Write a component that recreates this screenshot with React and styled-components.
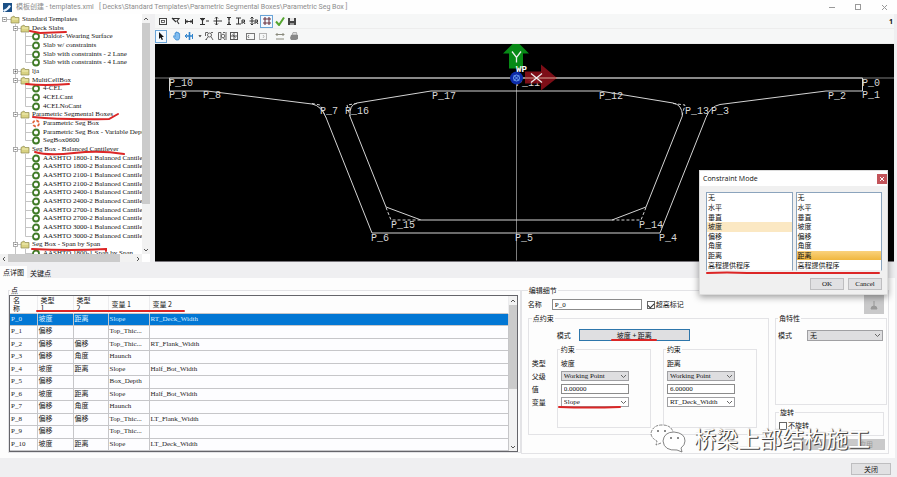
import React from 'react'
import { useState } from 'react'
import styled, { createGlobalStyle } from 'styled-components'

const latin = `"Liberation Serif", "Noto Sans CJK SC", serif`
const ui = `"Open Sans", "Noto Sans CJK SC", sans-serif`

const GlobalStyle = createGlobalStyle`
    * { box-sizing: border-box; }
    body { margin: 0; background: #efeff1; }
    button, input, select { font: inherit; color: inherit; margin: 0; padding: 0; border-radius: 0; }
    ul { list-style: none; margin: 0; padding: 0; }
    svg { display: block; flex: none; }
`

const Page = styled.div`
    position: relative;
    display: flex;
    flex-direction: column;
    min-height: 100vh;
    overflow: hidden;
    font: 7px/9px "Noto Sans CJK SC", sans-serif;
    color: #111;
`

const TitleBar = styled.header`
    display: flex;
    align-items: center;
    gap: 4px;
    height: 14px;
    padding-left: 3px;
    background: #fefefe;
    color: #8c8c8c;
    font: 7px/12px Roboto, "Noto Sans CJK SC", sans-serif;

    h1 {
        flex: 1;
        margin: 0;
        font: inherit;
        white-space: pre;
    }
`

const WindowButtons = styled.div`
    display: flex;
`

const WindowButton = styled.button`
    display: grid;
    place-items: center;
    width: 26px;
    height: 12px;
    border: 0;
    background: none;
`

const Upper = styled.section`
    display: flex;
    height: 248px;
`

const TreePane = styled.aside`
    display: grid;
    grid-template: 1fr 8px / 1fr 8px;
    width: 150px;
    margin-right: 5px;
    background: #fff;
`

const TreeView = styled.div`
    overflow: hidden;
    padding-top: 1px;
`

const TreeList = styled.ul`
    display: grid;
    grid-template-rows: repeat(28, 1fr);
    height: 243px;
    font: 7px/9px ${latin};
`

const TreeRow = styled.li`
    position: relative;
    display: flex;
    align-items: center;
    gap: 3px;
    min-height: 0;
    white-space: nowrap;
`

const Stroke = styled.svg`
    position: absolute;
    overflow: visible;
    z-index: 1;
    fill: none;
    stroke: #dc2626;
    stroke-width: 2;
    stroke-linecap: round;
    pointer-events: none;
`

const TreeStroke = styled(Stroke)`
    left: 32px;
    top: 8px;
`

const FieldStroke = styled(Stroke)`
    left: 1px;
    top: 52px;
`

const HeadStroke = styled(Stroke)`
    left: 27px;
    top: 14px;
`

const UnderStroke = styled(Stroke)`
    left: 32px;
    bottom: -2px;
`

const ScrollBar = styled.div`
    display: flex;
    flex-direction: ${p => p.$across ? 'row' : 'column'};
    background: #f2f2f2;
`

const ScrollArrow = styled.button`
    display: grid;
    place-items: center;
    width: 8px;
    height: 9px;
    border: 0;
    background: none;
`

const Thumb = styled.div`
    flex: ${p => p.$grow};
    background: #cbcbcb;
`

const Track = styled.div`
    flex: ${p => p.$grow};
`

const Drawing = styled.div`
    flex: 1;
    min-width: 0;
    margin-right: 3px;
    display: flex;
    flex-direction: column;
`

const ToolRow = styled.div`
    display: flex;
    align-items: center;
    height: 15px;
    padding-left: ${p => p.$indent}px;
    background: #f6f7f7;
    border-bottom: 1px solid #ededed;
`

const ToolButton = styled.button`
    display: grid;
    place-items: center;
    width: ${p => p.$w}px;
    height: 13px;
    border: 1px solid ${p => p.$on ? '#6ba5d8' : 'transparent'};
    background: ${p => p.$on ? '#f3f9ff' : 'none'};
`

const ToolGap = styled.span`
    width: ${p => p.$w}px;
    height: 9px;
`

const Count = styled.b`
    margin-left: auto;
    padding-right: 1px;
    font: bold 7px/9px ${ui};
`

const Canvas = styled.div`
    flex: 1;
    min-height: 0;
    background: #000;
    border-bottom: 1px solid #77747a;

    svg { width: 100%; height: 100%; }
    text { font: 10px "Liberation Mono", monospace; fill: #d8d8d8; }
    .origin { font-weight: bold; font-size: 9px; fill: #fff; }
`

const Tabs = styled.nav`
    display: flex;
    align-items: flex-end;
    height: 16px;
`

const Tab = styled.button`
    height: ${p => p.$on ? 12 : 10}px;
    padding: 0 3px;
    border: 0;
    background: ${p => p.$on ? '#fdfdfd' : 'none'};
`

const Panel = styled.main`
    position: relative;
    flex: 1;
    display: grid;
    grid-template-columns: 514fr 369fr;
    align-items: start;
    padding: 8px 6px 4px 8px;
    background: #fdfdfd;
    margin-right: 2px;
`

const Group = styled.fieldset`
    min-width: 0;
    margin: 0;
    padding: 0;
    border: 1px solid #e3e3e6;

    > legend {
        padding: 0 1px;
        margin-left: ${p => p.$inset || 0}px;
        height: 9px;
    }
`

const TableFrame = styled.div`
    display: flex;
    height: 157px;
    margin-right: 2px;
    border: 1px solid #65656a;
    position: relative;
`

const PointTable = styled.table`
    flex: 1;
    height: 155px;
    table-layout: fixed;
    border-collapse: collapse;
    font: 7px/9px ${latin};

    th {
        height: 17px;
        padding: 0 0 0 3px;
        border-right: 1px solid #ececee;
        text-align: left;
        font: 7px/8px "Noto Sans CJK SC", sans-serif;
    }
    td {
        padding: 0 0 0 1px;
        border: 1px solid #c6c6c9;
        border-left: 0;
        line-height: 9px;
        white-space: nowrap;
        overflow: hidden;
    }
`

const PointRow = styled.tr`
    background: ${p => p.$on ? '#0277d4' : '#fdfdff'};
    color: ${p => p.$on ? '#dcefff' : '#222'};
`

const EditGroup = styled(Group)`
    padding: 0 0 1px 6px;
    height: 168px;
`

const NameRow = styled.div`
    display: flex;
    align-items: center;
    height: 19px;
    padding-right: 4px;

    > label:first-child { width: 24px; }
    > label + input + label { margin-left: 5px; }
`

const TextBox = styled.input`
    width: ${p => p.$w ? p.$w + 'px' : '100%'};
    height: ${p => p.$h || 10}px;
    padding: 0 2px;
    border: 1px solid #8b8b8b;
    background: #fff;
    font: 7px/8px ${latin};
    min-width: 0;
`

const CheckLine = styled.label`
    display: flex;
    align-items: center;
    gap: 1px;

    input {
        appearance: none;
        width: 8px;
        height: 8px;
        border: 1px solid #666;
        background: #fff;
        display: grid;
        place-items: center;
    }
    input:checked::after {
        content: '';
        width: 5px;
        height: 3px;
        border: solid #333;
        border-width: 0 0 1px 1px;
        transform: rotate(-45deg);
    }
`

const BridgeButton = styled.button`
    display: grid;
    place-items: center;
    width: 20px;
    height: 19px;
    margin-left: auto;
    border: 0;
    background: #c9c9ca;
`

const EditBody = styled.div`
    display: grid;
    grid-template-columns: 241fr 113fr;
    gap: 6px;
    align-items: start;
`

const PointGroup = styled(Group)`
    padding: 6px 11px 6px 3px;
`

const ModeRow = styled.div`
    display: flex;
    align-items: center;
    padding-left: 25px;
    gap: 8px;
`

const ModeButton = styled.button`
    position: relative;
    width: 111px;
    height: 12px;
    border: 1px solid #2d76ab;
    background: #dfdfe1;
    line-height: 9px;
`

const Constraints = styled.div`
    display: grid;
    grid-template-columns: 13px 1fr 1fr;
    gap: 12px;
    margin-top: 4px;
`

const Fields = styled.div`
    display: grid;
    grid-auto-rows: 10px;
    gap: 3px;
    align-items: center;
    position: relative;
    white-space: nowrap;
    padding: ${p => p.$labels ? '13px 0 0' : '4px 21px 20px 3px'};
`

const SelectBox = styled.div`
    position: relative;
    flex: 1;
    min-width: 0;

    select {
        appearance: none;
        display: block;
        width: 100%;
        height: ${p => p.$h || 10}px;
        padding: 0 9px 0 2px;
        border: 1px solid #a0a0a3;
        background: ${p => p.$grey ? '#dedee0' : '#fff'};
        font: 7px/8px ${latin};
    }
    svg {
        position: absolute;
        right: 2px;
        top: 3px;
        pointer-events: none;
    }
`

const SideColumn = styled.div`
    display: grid;
    gap: 3px;
    padding-right: 1px;
`

const AngleGroup = styled(Group)`
    height: 91px;
    padding: 7px 3px 0 2px;

    > div { display: flex; gap: 15px; align-items: center; }
`

const TurnGroup = styled(Group)`
    height: 28px;
    padding: 4px 3px 0;
    margin-right: 3px;
`

const ApplyButton = styled.button`
    justify-self: end;
    width: 84px;
    height: 11px;
    margin-right: 2px;
    padding: 0 12px;
    border: 0;
    background: #c9c9ca;
    color: #999;
    text-align: right;
    line-height: 9px;
`

const Footer = styled.footer`
    display: flex;
    justify-content: flex-end;
    align-items: flex-start;
    height: 20px;
    padding: 5px 6px 0 0;
`

const PlainButton = styled.button`
    width: ${p => p.$w}px;
    height: 12px;
    border: 1px solid #bebec0;
    background: #e1e1e3;
    line-height: 9px;
`

const Dialog = styled.div`
    position: absolute;
    z-index: 2;
    top: 170px;
    right: 9px;
    width: 189px;
    padding-bottom: 4px;
    border: 1px solid #dcdcdc;
    background: #f0f0f0;
    box-shadow: 0 2px 7px #0006;
`

const DialogHead = styled.div`
    display: flex;
    justify-content: space-between;
    align-items: center;
    height: 15px;
    padding-left: 3px;
    background: #fff;

    h2 { margin: 0; font: 7px/10px ${ui}; }
    button {
        display: grid;
        place-items: center;
        width: 10px;
        height: 10px;
        border: 0;
        background: #c3545a;
    }
`

const DialogBody = styled.div`
    position: relative;
    display: grid;
    grid-template-columns: 1fr 1fr;
    gap: 3px;
    padding: 6px 5px 7px 6px;
`

const ModeList = styled.ul`
    display: grid;
    grid-auto-rows: 1fr;
    height: 79px;
    border: 1px solid #8ba4bd;
    border-bottom-color: #f0f0f0;
    background: #fff;
`

const ModeItem = styled.button`
    display: block;
    width: 100%;
    height: 100%;
    padding-left: 1px;
    border: 0;
    background: ${p => p.$on || 'none'};
    text-align: left;
    line-height: 9px;
`

const DialogStroke = styled(Stroke)`
    left: 7px;
    bottom: 3px;
`

const DialogButtons = styled.div`
    display: flex;
    justify-content: flex-end;
    gap: 4px;
    padding-right: 5px;
    font: 7px/9px ${latin};
`

const Watermark = styled.div`
    position: absolute;
    right: 25px;
    bottom: 5px;
    display: flex;
    align-items: center;
    gap: 7px;
    color: #fff;
    font: 22px/30px "Noto Sans CJK SC", sans-serif;
    text-shadow: 1px 1px 0 #444, 1px 0 1px #777;
    pointer-events: none;

    span { margin-top: -3px; }
`

const tree = [
    ['root', 'Standard Templates'],
    ['folder', 'Deck Slabs', 'M-2 -1 L8 1 L34 0'],
    ['leaf', 'Daldot- Wearing Surface'],
    ['leaf', 'Slab w/ constraints'],
    ['leaf', 'Slab with constraints - 2 Lane'],
    ['last', 'Slab with constraints - 4 Lane'],
    ['closed', 'lja'],
    ['folder', 'MultiCellBox', 'M-6 0 Q12 2 37 0'],
    ['leaf', '4-CEL'],
    ['leaf', '4CELCant'],
    ['last', '4CELNoCant'],
    ['folder', 'Parametric Segmental Boxes', 'M1 -1 Q30 2 77 1 L86 -4'],
    ['active', 'Parametric Seg Box'],
    ['leaf', 'Parametric Seg Box - Variable Depth'],
    ['last', 'SegBox0600'],
    ['folder', 'Seg Box - Balanced Cantilever', 'M3 -1 Q16 3 42 0 T92 1'],
    ...['1800-1', '1800-2', '2100-1', '2100-2', '2400-1', '2400-2', '2700-1', '2700-2', '3000-1', '3000-2']
        .map((n, i) => [i === 9 ? 'last' : 'leaf', `AASHTO ${n} Balanced Cantilever`]),
    ['folder', 'Seg Box - Span by Span', 'M0 0 Q40 2 74 0 L74 2'],
]

const points = [
    ['P_0', '坡度', '距离', 'Slope', 'RT_Deck_Width'],
    ['P_1', '偏移', '', 'Top_Thic...', ''],
    ['P_2', '偏移', '偏移', 'Top_Thic...', 'RT_Flank_Width'],
    ['P_3', '偏移', '角度', 'Haunch', ''],
    ['P_4', '坡度', '距离', 'Slope', 'Half_Bot_Width'],
    ['P_5', '偏移', '', 'Box_Depth', ''],
    ['P_6', '坡度', '距离', 'Slope', 'Half_Bot_Width'],
    ['P_7', '偏移', '角度', 'Haunch', ''],
    ['P_8', '偏移', '偏移', 'Top_Thic...', 'LT_Flank_Width'],
    ['P_9', '偏移', '', 'Top_Thic...', ''],
    ['P_10', '坡度', '距离', 'Slope', 'LT_Deck_Width'],
]

const modes = ['无', '水平', '垂直', '坡度', '偏移', '角度', '距离', '高程提供程序']

const labels = [
    ['P_10', 169, 85], ['P_9', 169, 97], ['P_8', 203, 97], ['P_7', 320, 113], ['P_16', 345, 113],
    ['P_17', 432, 98], ['P_11', 516, 85], ['P_12', 599, 98], ['P_13', 685, 113], ['P_3', 711, 113],
    ['P_2', 828, 98], ['P_1', 862, 97], ['P_0', 862, 85], ['P_15', 391, 227], ['P_14', 639, 227],
    ['P_6', 371, 240], ['P_5', 515, 240], ['P_4', 659, 240],
]

const icons = {
    frame: <g fill="none" stroke="#444"><rect x="1.5" y="2.5" width="7" height="6" /><rect x="3.5" y="4.5" width="3" height="2" strokeWidth=".8" /></g>,
    poly: <path d="M1 2.5 H8 L6 5 L8 8 M1 2 L5 6" fill="none" stroke="#333" strokeWidth="1.1" />,
    span: <path d="M1.5 3 V8 M8.5 3 V8 M2 5.5 H8 M3.5 4 L2 5.5 L3.5 7 M6.5 4 L8 5.5 L6.5 7" fill="none" stroke="#333" />,
    beam: <path d="M1 2.5 H6 M1 8.5 H6 M3.5 2.5 V8.5 M2 4 L3.5 2.5 L5 4 M7 5 H10" fill="none" stroke="#333" strokeWidth="1.1" />,
    move: <path d="M4.500 1 V9 M1.500 5 H10 M3 2.500 L4.500 1 L6 2.500 M3 7.500 L4.500 9 L6 7.500" fill="none" stroke="#333" />,
    tall: <path d="M5 1.500 V8.500 M3 1.500 H7 M3 8.500 H7 M4 3 H6 M4 7 H6" fill="none" stroke="#333" />,
    beamR: <path d="M0 2 H5 M0 8 H5 M2.500 2 V8 M6 8 V4 H8.500 V6 H6 M7.500 6 L9 8" fill="none" stroke="#333" />,
    moveR: <path d="M3 1 V9 M0.500 5 H5 M1.500 2.500 L3 1 L4.500 2.500 M1.500 7.500 L3 9 L4.500 7.500 M6 8 V4 H8.500 V6 H6 M7.500 6 L9 8" fill="none" stroke="#333" />,
    hash: <path d="M3 1 V9 M7 1 V9 M1 3 H9 M1 7 H9" fill="none" stroke="#6b3340" strokeWidth="1.1" />,
    check: <path d="M1 5.500 L4 9 L9 1.500" fill="none" stroke="#55a630" strokeWidth="2" />,
    save: <g><path d="M1 2 H9 V9 H1 Z" fill="#444" /><path d="M3 2 H7 V5 H3 Z" fill="#e5e5e5" /><path d="M3 7 H7 V9 H3 Z" fill="#999" /></g>,
    pointer: <path d="M3 1 V8 L4.600 6.500 L5.800 9 L7 8.400 L5.800 6 H8 Z" fill="#111" />,
    hand: <path d="M2 4.500 L3 5.500 V2 H4 V1 H5.200 V1.500 H6.500 V2.500 H7.600 V7 L6.500 9 H4 L1.500 6 Z" fill="#7fbcf0" stroke="#2f83cc" strokeWidth=".7" />,
    orbit: <g fill="none" stroke="#2f83cc"><path d="M5.500 1 V9 M1 5 H8.500" strokeWidth="1.600" /><path d="M3 3 L1 5 L3 7 M8.500 3 V8" /></g>,
    down: <path d="M3 4 H7 L5 6.500 Z" fill="#333" />,
    zoomRect: <g fill="none" stroke="#666"><path d="M1.500 5 V1.500 H4 M7 1.500 H9 M1.500 8.500 H3" /><circle cx="5.500" cy="4" r="2" /><path d="M7 5.500 L9 9 M4 6 L2 8.500" /></g>,
    zoomAll: <g fill="none" stroke="#666"><path d="M1.500 1.500 H4 V8.500 H1.500 Z M9 1 V9 M6 1.500 H8" /><circle cx="6" cy="5" r="1.800" /><path d="M6.500 7 L8 9" /></g>,
    fit: <g fill="none" stroke="#555"><rect x="1.500" y="1.500" width="7" height="7" /><path d="M5 2 V8 M2 5 H8 M3.500 3.500 L6.500 6.500" /></g>,
    view: <g fill="none" stroke="#777"><rect x="1.500" y="2.500" width="8" height="6" /><path d="M4 4 L3 5.500 L4 7" /></g>,
    viewOff: <g fill="none" stroke="#b5b5b5"><rect x="1.500" y="2.500" width="7" height="6" /><path d="M5 4 L6 5.500 L5 7" /></g>,
    dims: <path d="M1 3.500 H9 M1 8 H9 M2.500 2 L1 3.500 L2.500 5 M7.500 2 L9 3.500 L7.500 5" fill="none" stroke="#8a8a7d" />,
    print: <g><path d="M2 4 H9 V8 L7 9 H2 L1 7 Z" fill="#888" /><path d="M3 4 L4 1.500 H7.500 L8 4 Z" fill="#ddd" stroke="#888" strokeWidth=".6" /></g>,
}

const Tool = ({ name, w = 12, on }) =>
    <ToolButton $w={w} $on={on} aria-label={name}>
        <svg width={name === 'down' ? 8 : 10} height="10" viewBox="0 0 10 10">{icons[name]}</svg>
    </ToolButton>

const Arrow = ({ dir }) => {
    const paths = { up: 'M1 4 L3 2 L5 4', down: 'M1 2 L3 4 L5 2', left: 'M4 1 L2 3 L4 5', right: 'M2 1 L4 3 L2 5' }
    return (
        <ScrollArrow aria-label={dir}>
            <svg width="6" height="6" fill="none" stroke="#555"><path d={paths[dir]} /></svg>
        </ScrollArrow>
    )
}

const TreeGlyph = ({ kind }) => {
    const folder = x =>
        <g>
            <path d={`M${x} 2.500 L${x + 3} 1 L${x + 4} 2.500 H${x + 8} V8 H${x} Z`} fill="#d9d283" stroke="#8e8b50" strokeWidth=".7" />
            <path d={`M${x + 1} 4 H${x + 7}`} stroke="#f2efb6" />
        </g>
    const box = (x, closed) =>
        <g fill="#fff" stroke="#9a9a9a" strokeWidth=".8">
            <rect x={x} y="2.500" width="4" height="4" />
            <path d={`M${x + 1} 4.500 h2` + (closed ? ` M${x + 2} 3.500 v2` : '')} stroke="#555" />
        </g>

    if (kind === 'root') {
        return <svg width="19" height="9" overflow="visible">
            <path d="M7 4.500 H11" stroke="#bbb" />{box(2.5)}{folder(11)}
        </svg>
    }
    if (kind === 'folder' || kind === 'closed') {
        return <svg width="29" height="9" overflow="visible">
            <path d="M15.500 0 V9 M18 4.500 H21" stroke="#c4c4c4" />{box(13.5, kind === 'closed')}{folder(21)}
        </svg>
    }
    return <svg width="40" height="9" overflow="visible" fill="none">
        <path d={`M15.500 0 V9 M25.500 0 V${kind === 'last' ? 4.5 : 9} M25.500 4.500 H32`} stroke="#c4c4c4" />
        {kind === 'active'
            ? <circle cx="36" cy="4.500" r="3" stroke="#e0643a" strokeWidth="1.800" strokeDasharray="3 1.700" />
            : <circle cx="36" cy="4.500" r="3" stroke="#3f7a26" strokeWidth="1.800" />}
    </svg>
}

const Drop = ({ grey, h, label, value }) =>
    <SelectBox $grey={grey} $h={h}>
        <select aria-label={label} defaultValue={value}>
            <option>{value}</option>
        </select>
        <svg width="7" height="5" fill="none" stroke="#666"><path d="M1 1 L3.500 3.500 L6 1" /></svg>
    </SelectBox>

const Section = () =>
    <svg viewBox="155 44 739 216" role="img" aria-label="Box section">
        <path d="M155 77.500 H894 M516.500 78 V260" stroke="#7c7c7c" />
        <g fill="none" stroke="#d4d4d4">
            <path d="M169.500 77.500 H862.500 V90.500 H826 L720 104 Q710 106 706 117 L660 232.500 H372 L326 117 Q321 105 312 103.500 L207 90.500 H169.500 Z" />
            <path d="M431 90.500 H600 L673 102.500 Q682 104 682.500 115 L646 206.500 L612 219.500 H421 L386 206.500 L350 116 Q349 104 357 102.500 Z" />
            <path d="M312 103 L320 104.500 L326 117 M357 103 L347 104.500 L350 116 M673 103 L685 104.500 L682 115 M386 207 L391 219.500 H421 M646 207 L641 219.500 H612" strokeDasharray="3 2" />
        </g>
        {labels.map(([name, x, y]) => <text key={name} x={x} y={y}>{name}</text>)}
        <path d="M503 53 L516 40 L529 53 H523 V68 H509 V53 Z" fill="#078a16" />
        <path d="M525 71 H541 V64 L557 77.500 L541 90 V83 H525 Z" fill="#8b0f19" fillOpacity=".9" />
        <path d="M525 77.500 H557" stroke="#c98" />
        <path d="M512 51 L516.500 57 L521 51 M516.500 57 V62 M531 73 L542 82 M542 73 L531 82" fill="none" stroke="#eee" strokeWidth="1.300" />
        <circle cx="516.500" cy="77.500" r="6.500" fill="#0c2ba8" />
        <circle cx="516.500" cy="77.500" r="3" fill="none" stroke="#6fa2ef" />
        <path d="M514 75 L519 80 M519 75 L514 80" stroke="#6fa2ef" />
        <text className="origin" x="516" y="71">WP</text>
    </svg>

const Constraint = ({ type, value, variable, marked }) =>
    <Group $inset={2}>
        <legend>约束</legend>
        <Fields>
            <span>{type}</span>
            <Drop grey label="父级" value="Working Point" />
            <TextBox aria-label="值" defaultValue={value} />
            <Drop label="变量" value={variable} />
            {marked && <FieldStroke width="62" height="2"><path d="M0 1 Q30 2 61 1" /></FieldStroke>}
        </Fields>
    </Group>

export default function App() {

    const [row, setRow] = useState('P_0')
    const [first, setFirst] = useState('坡度')
    const [second, setSecond] = useState('距离')
    const [open, setOpen] = useState(true)

    return (<Page>
        <GlobalStyle />

        <TitleBar>
            <svg width="9" height="9"><rect width="9" height="9" fill="#1a4f86" /><path d="M0 7 Q4 6 6 2 L8 3 Q6 7 1 9" fill="#eaf4ff" /></svg>
            <h1>{'模板创建 - templates.xml   [ Decks\\Standard Templates\\Parametric Segmental Boxes\\Parametric Seg Box ]'}</h1>
            <WindowButtons>
                <WindowButton aria-label="Minimize"><svg width="7" height="7"><path d="M0 3.500 H6" stroke="#999" /></svg></WindowButton>
                <WindowButton aria-label="Maximize"><svg width="7" height="7"><rect x=".5" y=".5" width="5" height="5" fill="none" stroke="#999" /></svg></WindowButton>
                <WindowButton aria-label="Close"><svg width="7" height="7"><path d="M1 1 L6 6 M6 1 L1 6" stroke="#999" /></svg></WindowButton>
            </WindowButtons>
        </TitleBar>

        <Upper>
            <TreePane>
                <TreeView>
                    <TreeList>
                        {tree.map(([kind, name, mark]) =>
                            <TreeRow key={name}>
                                <TreeGlyph kind={kind} />
                                <span>{name}</span>
                                {mark && <TreeStroke width="90" height="3"><path d={mark} /></TreeStroke>}
                            </TreeRow>
                        )}
                        <TreeRow><TreeGlyph kind="leaf" /><span>AASHTO 1800-1 Span by Span</span></TreeRow>
                    </TreeList>
                </TreeView>
                <ScrollBar>
                    <Arrow dir="up" />
                    <Thumb $grow={180} />
                    <Track $grow={41} />
                    <Arrow dir="down" />
                </ScrollBar>
                <ScrollBar $across>
                    <Arrow dir="left" />
                    <Thumb $grow={111} />
                    <Track $grow={14} />
                    <Arrow dir="right" />
                </ScrollBar>
            </TreePane>

            <Drawing>
                <ToolRow $indent={2}>
                    <Tool name="frame" />
                    <Tool name="poly" w={14} />
                    <Tool name="span" w={11} />
                    <ToolGap $w={4} />
                    <Tool name="beam" />
                    <Tool name="move" w={13} />
                    <Tool name="tall" />
                    <Tool name="beamR" />
                    <Tool name="moveR" w={13} />
                    <Tool name="hash" w={13} on />
                    <Tool name="check" w={13} />
                    <Tool name="save" />
                    <Count>1</Count>
                </ToolRow>
                <ToolRow $indent={0}>
                    <Tool name="pointer" on />
                    <ToolGap $w={4} />
                    <Tool name="hand" />
                    <Tool name="orbit" />
                    <Tool name="down" w={6} />
                    <ToolGap $w={2} />
                    <Tool name="zoomRect" />
                    <Tool name="zoomAll" w={13} />
                    <Tool name="fit" />
                    <ToolGap $w={4} />
                    <Tool name="view" />
                    <Tool name="viewOff" w={13} />
                    <ToolGap $w={4} />
                    <Tool name="dims" w={13} />
                    <ToolGap $w={2} />
                    <Tool name="print" />
                </ToolRow>
                <Canvas><Section /></Canvas>
            </Drawing>
        </Upper>

        <Tabs>
            <Tab $on>点详图</Tab>
            <Tab>关键点</Tab>
        </Tabs>

        <Panel>
            <Group $inset={1}>
                <legend>点</legend>
                <TableFrame>
                    <PointTable>
                        <colgroup>
                            <col style={{ width: 27 }} />
                            <col style={{ width: 36 }} />
                            <col style={{ width: 35 }} />
                            <col style={{ width: 41 }} />
                            <col />
                        </colgroup>
                        <thead>
                            <tr>
                                <th>名<br />称</th>
                                <th>类型<br />1</th>
                                <th>类型<br />2</th>
                                <th>变量 1</th>
                                <th>变量 2</th>
                            </tr>
                        </thead>
                        <tbody>
                            {points.map(p =>
                                <PointRow key={p[0]} $on={p[0] === row} onClick={() => setRow(p[0])}>
                                    {p.map((cell, i) => <td key={i}>{cell}</td>)}
                                </PointRow>
                            )}
                        </tbody>
                    </PointTable>
                    <HeadStroke width="148" height="2"><path d="M0 1 H147" /></HeadStroke>
                    <ScrollBar>
                        <Arrow dir="up" />
                        <Thumb $grow={84} />
                        <Track $grow={53} />
                        <Arrow dir="down" />
                    </ScrollBar>
                </TableFrame>
            </Group>

            <EditGroup>
                <legend>编辑细节</legend>
                <NameRow>
                    <label htmlFor="pointName">名称</label>
                    <TextBox id="pointName" $w={90} $h={11} defaultValue="P_0" />
                    <CheckLine><input type="checkbox" defaultChecked />超高标记</CheckLine>
                    <BridgeButton aria-label="Pick">
                        <svg width="8" height="10"><path d="M4 1 V6 M1 9 Q1 6 4 6 Q7 6 7 9 Z" fill="#999" stroke="#999" /></svg>
                    </BridgeButton>
                </NameRow>
                <EditBody>
                    <PointGroup>
                        <legend>点约束</legend>
                        <ModeRow>
                            <span>模式</span>
                            <ModeButton onClick={() => setOpen(true)}>
                                {first} + {second}
                                <UnderStroke width="45" height="3"><path d="M0 1 H44" /></UnderStroke>
                            </ModeButton>
                        </ModeRow>
                        <Constraints>
                            <Fields $labels>
                                <span>类型</span>
                                <span>父级</span>
                                <span>值</span>
                                <span>变量</span>
                            </Fields>
                            <Constraint type={first} value="0.00000" variable="Slope" marked />
                            <Constraint type={second} value="6.00000" variable="RT_Deck_Width" />
                        </Constraints>
                    </PointGroup>
                    <SideColumn>
                        <AngleGroup>
                            <legend>角特性</legend>
                            <div><span>模式</span><Drop grey h={11} label="模式" value="无" /></div>
                        </AngleGroup>
                        <TurnGroup>
                            <legend>旋转</legend>
                            <CheckLine><input type="checkbox" />不旋转</CheckLine>
                        </TurnGroup>
                        <ApplyButton disabled>应用</ApplyButton>
                    </SideColumn>
                </EditBody>
            </EditGroup>

            <Watermark>
                <svg width="37" height="30" fill="#fff" stroke="#666" strokeWidth=".8">
                    <path d="M11 20 L6 22 L7 18 Q1 15 1 10 Q3 2 12 2 Q21 2 23 9" strokeDasharray="3 1" />
                    <path d="M24 9 Q35 10 35 18 Q35 22 31 25 L32 29 L27 27 Q14 28 13 18 Q14 9 24 9 Z" />
                    <path d="M7 8 H9 M14 8 H16 M20 15 H22 M27 15 H29" strokeWidth="1.500" />
                </svg>
                <span>桥梁上部结构施工</span>
            </Watermark>
        </Panel>

        <Footer><PlainButton $w={40}>关闭</PlainButton></Footer>

        {open && <Dialog role="dialog" aria-label="Constraint Mode">
            <DialogHead>
                <h2>Constraint Mode</h2>
                <button aria-label="Close" onClick={() => setOpen(false)}>
                    <svg width="4" height="4"><path d="M0 0 L4 4 M4 0 L0 4" stroke="#fff" /></svg>
                </button>
            </DialogHead>
            <DialogBody>
                <ModeList>
                    {modes.map(m =>
                        <li key={m}><ModeItem $on={m === first && '#fbe8c3'} onClick={() => setFirst(m)}>{m}</ModeItem></li>
                    )}
                </ModeList>
                <ModeList>
                    {modes.map(m =>
                        <li key={m}><ModeItem $on={m === second && 'linear-gradient(#fad27d, #f0b73f)'} onClick={() => setSecond(m)}>{m}</ModeItem></li>
                    )}
                </ModeList>
                <DialogStroke width="172" height="3"><path d="M0 1 Q20 0 40 1 H172" /></DialogStroke>
            </DialogBody>
            <DialogButtons>
                <PlainButton $w={34} onClick={() => setOpen(false)}>OK</PlainButton>
                <PlainButton $w={34} onClick={() => setOpen(false)}>Cancel</PlainButton>
            </DialogButtons>
        </Dialog>}
    </Page>)
}
